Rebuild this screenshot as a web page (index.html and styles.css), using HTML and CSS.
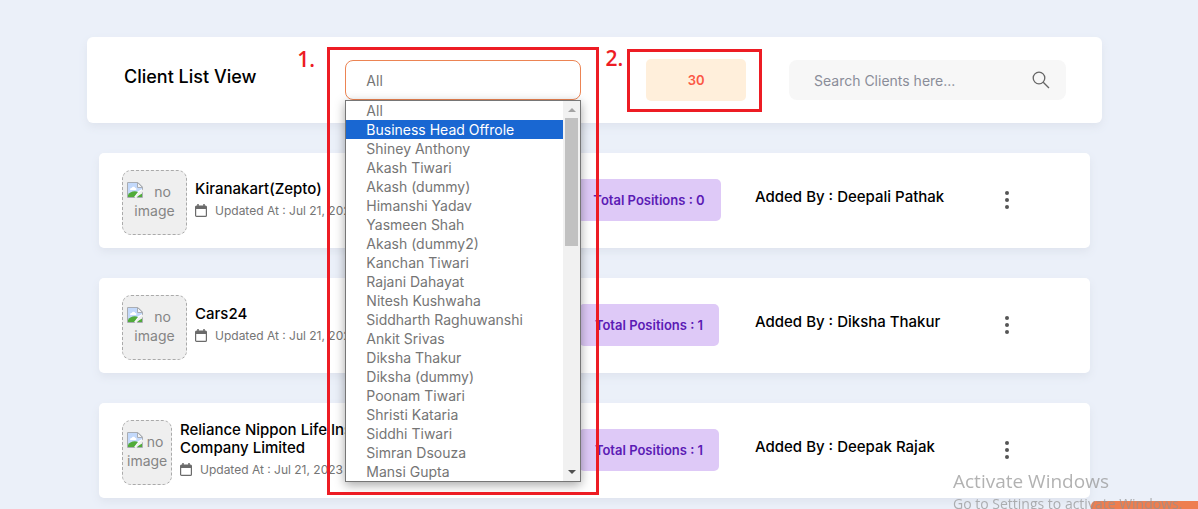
FILE: index.html
```html
<!DOCTYPE html>
<html lang="en">
<head>
<meta charset="utf-8">
<meta name="viewport" content="width=device-width, initial-scale=1">
<title>Client List View</title>
<link rel="stylesheet" href="styles.css">
</head>
<body>
<svg class="sprite" aria-hidden="true">
  <symbol id="broken" viewBox="0 0 16 16">
    <path d="M.5 .5H11l4.500 4.500v10.500H.5z" fill="#fff" stroke="#a9adb3"/>
    <path d="M1 1H10.500V5.500h4.500v1.500L10 10l-3 5H1z" fill="#c3d9fb"/>
    <path d="M3 7.500c0-1.200 1-1.700 1.800-1.500C5.200 4.300 7.800 4.300 8.200 6 9.500 5.900 9.900 7.500 9 8H3.500z" fill="#fff"/>
    <path d="M1 15V13C3 9.500 7.500 8.500 11 10L7 15z" fill="#51ab3a"/>
    <path d="M10.500 .5V5.500h5z" fill="#f3f4f6" stroke="#a9adb3" stroke-linejoin="round"/>
    <path d="M16 7.500 11.500 10.500 7.500 16h2L12.500 12.500l3.500-2.500z" fill="#efefef"/>
    <path d="M10 15h5V11.500L12.500 13z" fill="#51ab3a"/>
  </symbol>
  <symbol id="calendar" viewBox="0 0 12 13">
    <path d="M3 0v3M9 0v3" stroke="#6b6b6b" stroke-width="1.500"/>
    <path d="M0 3q0-1.500 1.500-1.500h9Q12 1.500 12 3v2H0z" fill="#6b6b6b"/>
    <rect x=".6" y="3" width="10.800" height="9.400" rx="1" fill="none" stroke="#6b6b6b" stroke-width="1.200"/>
  </symbol>
</svg>

<main class="page">
  <header class="toolbar">
    <h1 class="title">Client List View</h1>
    <div class="filter">
      <select class="filter-select" aria-label="Added by"><option>All</option></select>
      <div class="popup">
        <ul class="options" role="listbox" aria-label="Added by">
          <li role="option">All</li>
          <li role="option" class="active" aria-selected="true">Business Head Offrole</li>
          <li role="option">Shiney Anthony</li>
          <li role="option">Akash Tiwari</li>
          <li role="option">Akash (dummy)</li>
          <li role="option">Himanshi Yadav</li>
          <li role="option">Yasmeen Shah</li>
          <li role="option">Akash (dummy2)</li>
          <li role="option">Kanchan Tiwari</li>
          <li role="option">Rajani Dahayat</li>
          <li role="option">Nitesh Kushwaha</li>
          <li role="option">Siddharth Raghuwanshi</li>
          <li role="option">Ankit Srivas</li>
          <li role="option">Diksha Thakur</li>
          <li role="option">Diksha (dummy)</li>
          <li role="option">Poonam Tiwari</li>
          <li role="option">Shristi Kataria</li>
          <li role="option">Siddhi Tiwari</li>
          <li role="option">Simran Dsouza</li>
          <li role="option">Mansi Gupta</li>
        </ul>
        <div class="scrollbar" aria-hidden="true">
          <svg class="arrow" viewBox="0 0 17 17"><path d="M5 11l4-4 4 4z" fill="#a3a3a3"/></svg>
          <div class="track"><div class="thumb"></div></div>
          <svg class="arrow" viewBox="0 0 17 17"><path d="M5 6h8l-4 4z" fill="#505050"/></svg>
        </div>
      </div>
      <div class="mark mark-filter"></div>
      <span class="mark-label label-filter">1.</span>
    </div>
    <div class="count">30
      <div class="mark mark-count"></div>
      <span class="mark-label label-count">2.</span>
    </div>
    <form class="search">
      <input class="search-input" type="text" aria-label="Search clients" placeholder="Search Clients here...">
      <button class="icon-button" type="button" aria-label="Search">
        <svg width="18" height="18" viewBox="0 0 18 18" fill="none" stroke="#666" stroke-width="1.300"><circle cx="7" cy="7" r="5.800"/><path d="M11.200 11.200 17 17"/></svg>
      </button>
    </form>
  </header>

  <article class="card">
    <div class="client">
      <div class="photo"><svg class="photo-icon"><use href="#broken"/></svg>no image</div>
      <div class="details">
        <h2 class="name">Kiranakart(Zepto)</h2>
        <p class="updated"><svg class="calendar"><use href="#calendar"/></svg>Updated At : Jul 21, 2023</p>
      </div>
    </div>
    <div class="positions"><span class="pill">Total Positions : 0</span></div>
    <p class="added">Added By : Deepali Pathak</p>
    <button class="icon-button" type="button" aria-label="More actions"><svg width="4" height="18" viewBox="0 0 4 18" fill="#555"><circle cx="2" cy="2" r="2"/><circle cx="2" cy="9" r="2"/><circle cx="2" cy="16" r="2"/></svg></button>
  </article>

  <article class="card">
    <div class="client">
      <div class="photo"><svg class="photo-icon"><use href="#broken"/></svg>no image</div>
      <div class="details">
        <h2 class="name">Cars24</h2>
        <p class="updated"><svg class="calendar"><use href="#calendar"/></svg>Updated At : Jul 21, 2023</p>
      </div>
    </div>
    <div class="positions"><span class="pill">Total Positions : 1</span></div>
    <p class="added">Added By : Diksha Thakur</p>
    <button class="icon-button" type="button" aria-label="More actions"><svg width="4" height="18" viewBox="0 0 4 18" fill="#555"><circle cx="2" cy="2" r="2"/><circle cx="2" cy="9" r="2"/><circle cx="2" cy="16" r="2"/></svg></button>
  </article>

  <article class="card">
    <div class="client">
      <div class="photo narrow"><svg class="photo-icon"><use href="#broken"/></svg>no image</div>
      <div class="details">
        <h2 class="name">Reliance Nippon Life Insurance Company Limited</h2>
        <p class="updated"><svg class="calendar"><use href="#calendar"/></svg>Updated At : Jul 21, 2023</p>
      </div>
    </div>
    <div class="positions"><span class="pill">Total Positions : 1</span></div>
    <p class="added">Added By : Deepak Rajak</p>
    <button class="icon-button" type="button" aria-label="More actions"><svg width="4" height="18" viewBox="0 0 4 18" fill="#555"><circle cx="2" cy="2" r="2"/><circle cx="2" cy="9" r="2"/><circle cx="2" cy="16" r="2"/></svg></button>
  </article>
</main>

<div class="corner"></div>
<aside class="watermark">
  <p class="watermark-title">Activate Windows</p>
  <p class="watermark-text">Go to Settings to activate Windows.</p>
</aside>
</body>
</html>
```
FILE: styles.css
```css
* { box-sizing: border-box; }
html { height: 100%; overflow: hidden; }
body {
  margin: 0;
  min-height: 100%;
  background: #ebf0f9;
  color: #000;
  font-family: Inter, "Liberation Sans", sans-serif;
  font-size: 14px;
}
h1, h2, p, ul { margin: 0; padding: 0; }
button, input, select { font: inherit; }
.sprite { position: absolute; width: 0; height: 0; }

.page {
  display: flex;
  flex-direction: column;
  gap: 30px;
  padding: 37px 96px 30px 87px;
}
.toolbar {
  display: grid;
  grid-template-columns: 222fr 236fr 66fr 100fr 43fr 275fr;
  align-items: center;
  padding: 22px 36px 22px 37px;
  border-radius: 6px;
  background: #fff;
  box-shadow: 0 4px 8px #dfe4ee;
}
.title { font-size: 18px; font-weight: 500; line-height: 24px; padding-bottom: 7px; }

.filter { position: relative; z-index: 2; }
.filter-select {
  display: block;
  width: 100%;
  height: 40px;
  padding: 0 20px;
  border: 1px solid #ec8453;
  border-radius: 8px;
  background: #fff;
  color: #757575;
  appearance: none;
}
.popup {
  position: absolute;
  top: 40px;
  left: 0;
  right: 0;
  display: flex;
  border: 1px solid #767676;
  background: #fff;
  box-shadow: 0 3px 10px rgba(0, 0, 0, .35);
}
.options { flex: 1; list-style: none; color: #757575; }
.options li { padding-left: 20px; line-height: 19px; white-space: nowrap; }
.options .active { background: #1967d2; color: #fff; }
.scrollbar { display: flex; flex-direction: column; width: 17px; background: #f1f1f1; }
.arrow { display: block; height: 17px; }
.track { flex: 1; padding: 0 2px; }
.thumb { height: 37%; background: #c1c1c1; }

.count {
  grid-column: 4;
  position: relative;
  border-radius: 5px;
  background: #ffefdb;
  color: #fb5845;
  font-size: 13px;
  font-weight: 600;
  line-height: 42px;
  text-align: center;
}
.mark { position: absolute; border: 3px solid #ed1c24; }
.mark-filter { top: -13px; left: -18px; right: -18px; height: 448px; }
.mark-count { top: -10px; left: -19px; right: -16px; bottom: -11px; }
.mark-label {
  position: absolute;
  color: #ed1c24;
  font-family: "Open Sans", sans-serif;
  font-size: 21px;
  font-weight: 600;
  line-height: 24px;
}
.label-filter { top: -13px; left: -48px; }
.label-count { top: -13px; left: -41px; }

.search {
  grid-column: 6;
  display: flex;
  align-items: center;
  height: 40px;
  padding: 0 16px 0 25px;
  border-radius: 8px;
  background: #f7f7f7;
}
.search-input {
  flex: 1;
  min-width: 0;
  padding: 0;
  border: 0;
  outline: 0;
  background: none;
}
.search-input::placeholder { color: #8a8d99; opacity: 1; }
.icon-button {
  display: grid;
  place-items: center;
  padding: 0;
  border: 0;
  background: none;
}

.card {
  display: grid;
  grid-template-columns: 434fr 186fr 254fr 22fr 49fr;
  align-items: center;
  margin: 0 12px;
  padding: 12px 23px 13px;
  border-radius: 5px;
  background: #fff;
  box-shadow: 0 4px 8px #dfe4ee;
}
.client { display: flex; align-items: center; gap: 8px; }
.photo {
  width: 65px;
  height: 65px;
  margin-top: 5px;
  padding: 11px 4px;
  border: 1px dashed #aaa;
  border-radius: 9px;
  background: #efefef;
  color: #858585;
  line-height: 19px;
  text-align: center;
}
.narrow { width: 50px; }
.photo-icon { float: left; width: 16px; height: 16px; }
.details { display: grid; gap: 3px; width: 230px; }
.name { font-size: 15px; font-weight: 500; line-height: 18px; }
.updated {
  display: flex;
  align-items: center;
  gap: 8px;
  color: #757575;
  font-size: 12px;
  line-height: 20px;
}
.calendar { width: 12px; height: 13px; }
.positions { display: flex; justify-content: center; }
.pill {
  padding: 0 16px;
  border-radius: 5px;
  background: #dec9f7;
  color: #5b1bb5;
  font-size: 13px;
  font-weight: 600;
  line-height: 42px;
}
.added { padding: 0 0 7px 13px; font-size: 15px; font-weight: 500; line-height: 20px; }

.corner {
  position: fixed;
  right: 0;
  bottom: 0;
  width: 107px;
  height: 8px;
  border-radius: 5px 0 0 0;
  background: #ee7e50;
}
.watermark {
  position: fixed;
  right: 9px;
  bottom: -5px;
  color: rgba(145, 145, 145, .7);
  font-family: "Open Sans", "Noto Sans", sans-serif;
  white-space: nowrap;
  width: 236px;
}
.watermark-title { font-size: 19px; line-height: 26px; }
.watermark-text { font-size: 14px; line-height: 20px; }
```
